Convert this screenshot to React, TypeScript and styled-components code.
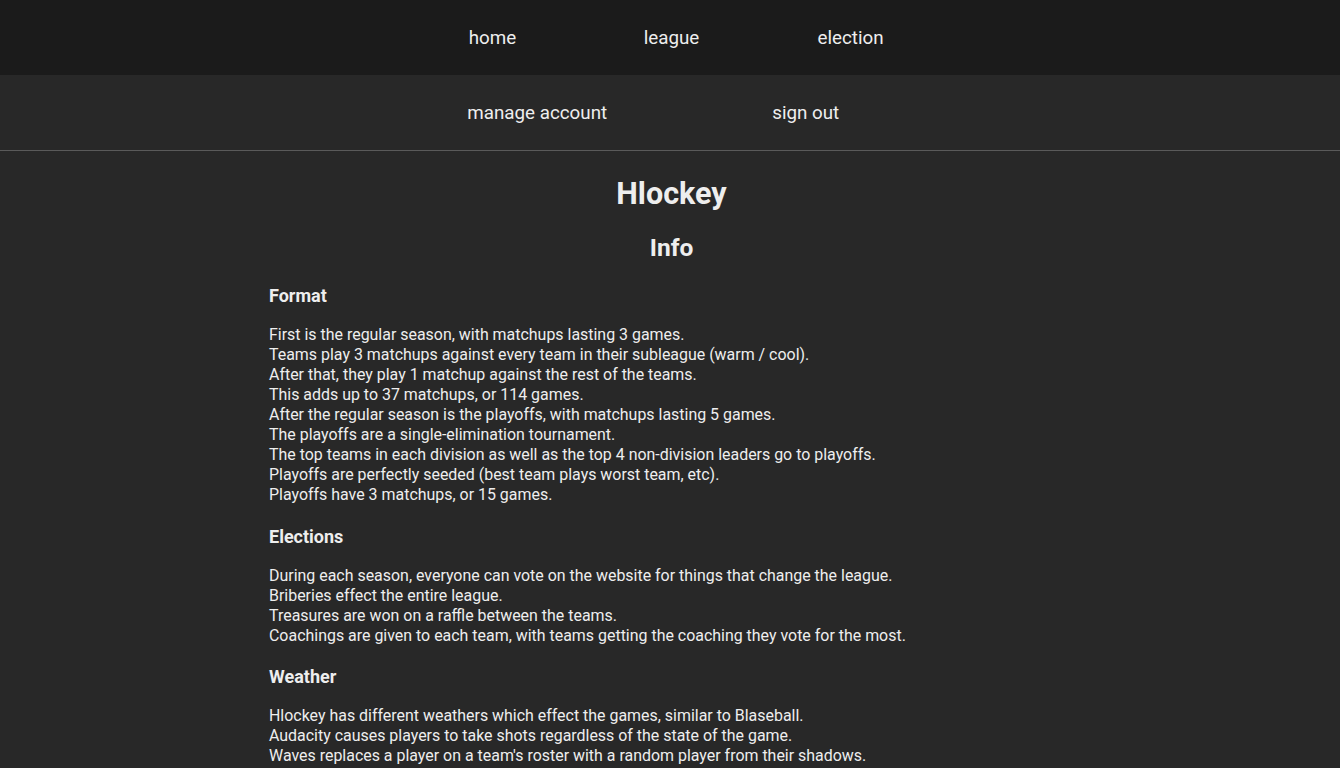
import React from "react";
import styled, { createGlobalStyle } from "styled-components";

const Global = createGlobalStyle`
  html, body { margin: 0; padding: 0; background: #282828; }
  body { font-family: Roboto, "Noto Sans", sans-serif; color: #eeeeee; }
`;

const TopBar = styled.nav<{ $dark?: boolean }>`
  background: ${(p) => (p.$dark ? "#1b1b1b" : "#282828")};
  height: 75px;
  display: flex;
  justify-content: center;
  align-items: center;
  border-bottom: ${(p) => (p.$dark ? "none" : "1px solid #5a5a5a")};
`;

const NavGrid = styled.div<{ $cols: number }>`
  width: 537px;
  margin-left: 3px;
  display: grid;
  grid-template-columns: repeat(${(p) => p.$cols}, 1fr);
`;

const NavLink = styled.a`
  text-align: center;
  font-size: 18.8px;
  color: #eeeeee;
  text-decoration: none;
  cursor: pointer;
`;

const Main = styled.main`
  width: 804px;
  margin: 0 auto;
  padding-top: 24px;
  padding-bottom: 40px;
`;

const Title = styled.h1`
  text-align: center;
  font-size: 30.5px;
  font-weight: 700;
  margin: 0;
  padding-left: 3px;
  line-height: 38px;
`;

const Subtitle = styled.h2`
  text-align: center;
  font-size: 24.5px;
  font-weight: 700;
  margin: 21px 0 0;
  padding-left: 3px;
  line-height: 28px;
`;

const SectionTitle = styled.h3`
  font-size: 18px;
  font-weight: 700;
  margin: 0;
  padding-left: 1px;
  line-height: 22px;
`;

const Section = styled.section<{ $first?: boolean }>`
  margin-top: ${(p) => (p.$first ? "23px" : "20.5px")};
`;

const Lines = styled.div`
  margin-top: 18px;
  padding-left: 1px;
  font-size: 15.95px;
  line-height: 20px;
`;

const Line = styled.div``;

const sections = [
  {
    title: "Format",
    lines: [
      "First is the regular season, with matchups lasting 3 games.",
      "Teams play 3 matchups against every team in their subleague (warm / cool).",
      "After that, they play 1 matchup against the rest of the teams.",
      "This adds up to 37 matchups, or 114 games.",
      "After the regular season is the playoffs, with matchups lasting 5 games.",
      "The playoffs are a single-elimination tournament.",
      "The top teams in each division as well as the top 4 non-division leaders go to playoffs.",
      "Playoffs are perfectly seeded (best team plays worst team, etc).",
      "Playoffs have 3 matchups, or 15 games.",
    ],
  },
  {
    title: "Elections",
    lines: [
      "During each season, everyone can vote on the website for things that change the league.",
      "Briberies effect the entire league.",
      "Treasures are won on a raffle between the teams.",
      "Coachings are given to each team, with teams getting the coaching they vote for the most.",
    ],
  },
  {
    title: "Weather",
    lines: [
      "Hlockey has different weathers which effect the games, similar to Blaseball.",
      "Audacity causes players to take shots regardless of the state of the game.",
      "Waves replaces a player on a team's roster with a random player from their shadows.",
      "Chicken increases the chance of a game ending early.",
    ],
  },
];

export default function App() {
  return (
    <>
      <Global />
      <TopBar $dark>
        <NavGrid $cols={3}>
          <NavLink>home</NavLink>
          <NavLink>league</NavLink>
          <NavLink>election</NavLink>
        </NavGrid>
      </TopBar>
      <TopBar>
        <NavGrid $cols={2}>
          <NavLink>manage account</NavLink>
          <NavLink>sign out</NavLink>
        </NavGrid>
      </TopBar>
      <Main>
        <Title>Hlockey</Title>
        <Subtitle>Info</Subtitle>
        {sections.map((s, i) => (
          <Section key={s.title} $first={i === 0}>
            <SectionTitle>{s.title}</SectionTitle>
            <Lines>
              {s.lines.map((l) => (
                <Line key={l}>{l}</Line>
              ))}
            </Lines>
          </Section>
        ))}
      </Main>
    </>
  );
}
